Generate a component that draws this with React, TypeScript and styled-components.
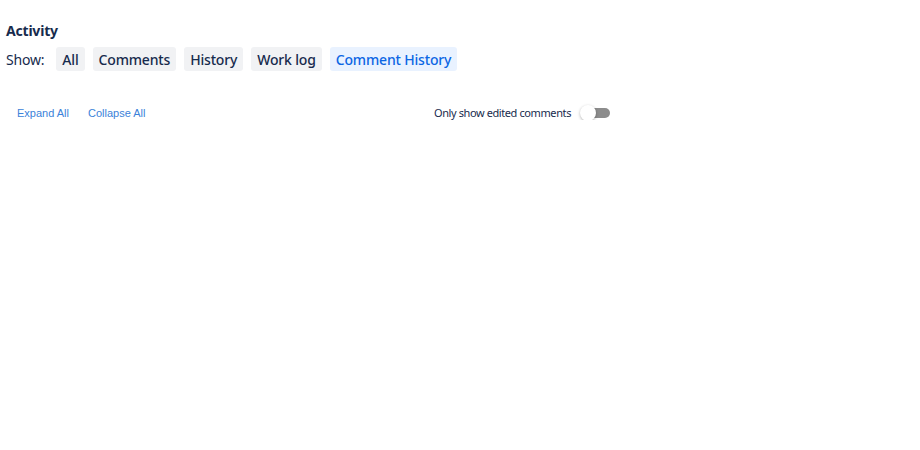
import { useState } from "react";
import styled, { createGlobalStyle } from "styled-components";

const GlobalStyle = createGlobalStyle`
  body {
    margin: 0;
    background: #ffffff;
    font-family: "Noto Sans", "Open Sans", sans-serif;
    color: #172b4d;
  }
`;

const Wrapper = styled.div`
  padding: 21px 6px 0;
`;

const Heading = styled.h2`
  margin: 0 0 6px;
  font-size: 14px;
  line-height: 20px;
  font-weight: 700;
  letter-spacing: -0.2px;
  color: #172b4d;
`;

const FilterBar = styled.div`
  display: flex;
  align-items: center;
  gap: 8px;
`;

const ShowLabel = styled.span`
  font-size: 14px;
  letter-spacing: -0.2px;
  color: #172b4d;
  margin-right: 4px;
`;

const FilterButton = styled.button<{ $active?: boolean }>`
  border: none;
  border-radius: 3px;
  height: 24px;
  padding: 0 6px;
  font-family: inherit;
  font-size: 14px;
  font-weight: 500;
  letter-spacing: -0.17px;
  cursor: pointer;
  background: ${(p) => (p.$active ? "#e9f2ff" : "#f1f2f4")};
  color: ${(p) => (p.$active ? "#0c66e4" : "#172b4d")};
`;

const Toolbar = styled.div`
  width: 593px;
  margin-top: 34px;
  padding-left: 11px;
  display: flex;
  align-items: center;
  justify-content: space-between;
`;

const LinkGroup = styled.div`
  display: flex;
  gap: 19px;
`;

const TextLink = styled.a`
  font-family: "Liberation Sans", Arial, sans-serif;
  font-size: 11px;
  color: #3b82d9;
  cursor: pointer;
`;

const SwitchLabel = styled.label`
  display: flex;
  align-items: center;
  gap: 7px;
  font-size: 11px;
  letter-spacing: -0.4px;
  color: #172b4d;
`;

const Track = styled.span<{ $on: boolean }>`
  position: relative;
  width: 28px;
  height: 10px;
  border-radius: 5px;
  background: ${(p) => (p.$on ? "#4c9aff" : "#8c8c8c")};
  margin-left: 4px;
`;

const Knob = styled.span<{ $on: boolean }>`
  position: absolute;
  top: -3px;
  left: ${(p) => (p.$on ? "14px" : "-2px")};
  width: 16px;
  height: 16px;
  border-radius: 50%;
  background: #ffffff;
  box-shadow: 0 1px 3px rgba(0, 0, 0, 0.3);
`;

const filters = ["All", "Comments", "History", "Work log", "Comment History"];

export default function App() {
  const [active, setActive] = useState("Comment History");
  const [onlyEdited, setOnlyEdited] = useState(false);

  return (
    <Wrapper>
      <GlobalStyle />
      <Heading>Activity</Heading>
      <FilterBar>
        <ShowLabel>Show:</ShowLabel>
        {filters.map((f) => (
          <FilterButton key={f} $active={f === active} onClick={() => setActive(f)}>
            {f}
          </FilterButton>
        ))}
      </FilterBar>
      <Toolbar>
        <LinkGroup>
          <TextLink>Expand All</TextLink>
          <TextLink>Collapse All</TextLink>
        </LinkGroup>
        <SwitchLabel onClick={() => setOnlyEdited(!onlyEdited)}>
          Only show edited comments
          <Track $on={onlyEdited}>
            <Knob $on={onlyEdited} />
          </Track>
        </SwitchLabel>
      </Toolbar>
    </Wrapper>
  );
}
